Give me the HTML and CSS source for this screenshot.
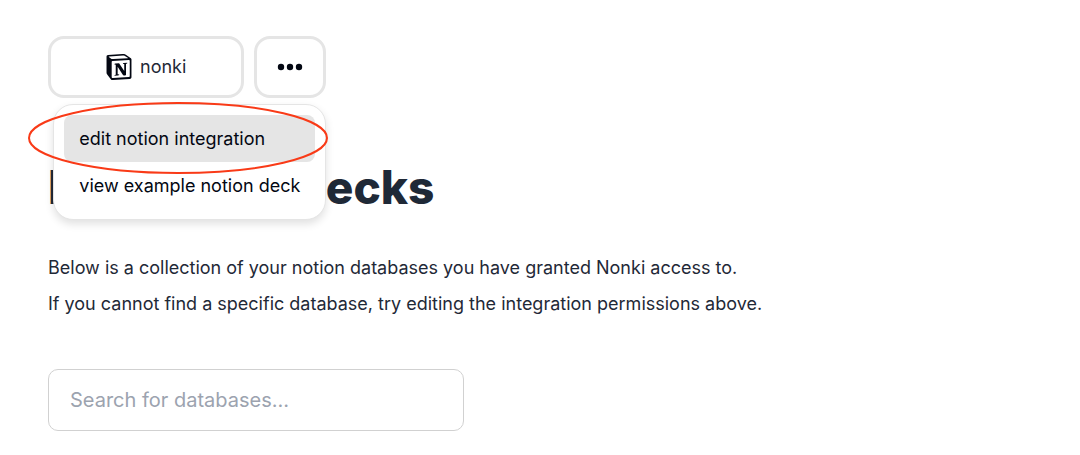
FILE: index.html
```html
<!DOCTYPE html>
<html lang="en">
<head>
    <meta charset="UTF-8">
    <meta name="viewport" content="width=device-width, initial-scale=1.0">
    <title>Nonki</title>
    <link rel="stylesheet" href="styles.css">
</head>
<body>

    <main class="page">
        <!-- Workspace buttons -->
        <div class="toolbar">
            <button type="button" class="btn workspace">
                <svg class="notion-logo" viewBox="0 0 24 24" aria-hidden="true">
                    <path d="M4.459 4.208c.746.606 1.026.56 2.428.466l13.215-.793c.28 0 .047-.28-.046-.326L17.86 1.968c-.42-.326-.981-.7-2.055-.607L3.01 2.295c-.466.046-.56.28-.374.466zm.793 3.08v13.904c0 .747.373 1.027 1.214.98l14.523-.84c.841-.046.935-.56.935-1.167V6.354c0-.606-.233-.933-.748-.887l-15.177.887c-.56.047-.747.327-.747.933zm14.337.745c.093.42 0 .84-.42.888l-.7.14v10.264c-.608.327-1.168.514-1.635.514-.748 0-.935-.234-1.495-.933l-4.577-7.186v6.952L12.21 19s0 .84-1.168.84l-3.222.186c-.093-.186 0-.653.327-.746l.84-.233V9.854L7.822 9.76c-.094-.42.14-1.026.793-1.073l3.456-.233 4.764 7.279v-6.44l-1.215-.139c-.093-.514.28-.887.747-.933zM1.936 1.035l13.31-.98c1.634-.14 2.055-.047 3.082.7l4.249 2.986c.7.513.934.653.934 1.213v16.378c0 1.026-.373 1.634-1.68 1.726l-15.458.934c-.98.047-1.448-.093-1.962-.747l-3.129-4.06c-.56-.747-.793-1.306-.793-1.96V2.667c0-.839.374-1.54 1.447-1.632z"/>
                </svg>
                nonki
            </button>
            <button type="button" class="btn more" aria-label="More options" aria-expanded="true">
                <svg class="dots" viewBox="0 0 26 8" aria-hidden="true">
                    <circle cx="4" cy="4" r="3.2"/>
                    <circle cx="13" cy="4" r="3.2"/>
                    <circle cx="22" cy="4" r="3.2"/>
                </svg>
            </button>

            <div class="menu">
                <button type="button" class="menu-item active">edit notion integration</button>
                <button type="button" class="menu-item">view example notion deck</button>
            </div>

            <svg class="highlight" viewBox="0 0 300 72" aria-hidden="true">
                <ellipse cx="150" cy="36" rx="149" ry="35"/>
            </svg>
        </div>

        <h1>My Notion Decks</h1>

        <div class="intro">
            <p>Below is a collection of your notion databases you have granted Nonki access to.</p>
            <p>If you cannot find a specific database, try editing the integration permissions above.</p>
        </div>

        <input type="search" class="search" placeholder="Search for databases…" aria-label="Search for databases">
    </main>

</body>
</html>
```
FILE: styles.css
```css
* {
    margin: 0;
    padding: 0;
    box-sizing: border-box;
}

body {
    font-family: 'Inter', 'Liberation Sans', sans-serif;
    font-size: 18px;
    color: #1f2937;
    background-color: #fff;
}

button, input {
    font: inherit;
}

.page {
    padding: 36px 48px 24px;
}

/* Workspace buttons */
.toolbar {
    display: flex;
    gap: 10px;
    width: fit-content;
    position: relative;
}

.btn {
    display: flex;
    align-items: center;
    justify-content: center;
    gap: 8px;
    padding: 15px 55px;
    line-height: 24px;
    color: #1f2937;
    background-color: #fff;
    border: 3px solid #e5e5e5;
    border-radius: 16px;
    cursor: pointer;
}

.more {
    padding: 15px 20px;
}

.notion-logo {
    width: 26px;
    height: 26px;
    fill: #030712;
}

.dots {
    width: 26px;
    height: 8px;
    fill: #030712;
}

/* Dropdown */
.menu {
    position: absolute;
    top: 100%;
    right: 0;
    z-index: 1;
    margin-top: 6px;
    padding: 10px;
    background-color: #fff;
    border: 1px solid #e5e5e5;
    border-radius: 20px;
    box-shadow: 0 4px 8px rgba(0, 0, 0, 0.12);
}

.menu-item {
    display: block;
    width: 100%;
    padding: 12px 15px;
    line-height: 23px;
    text-align: left;
    white-space: nowrap;
    color: #030712;
    background-color: transparent;
    border: none;
    border-radius: 8px;
    cursor: pointer;
}

.menu-item.active {
    background-color: #e5e5e5;
}

/* Red ring around the active item */
.highlight {
    position: absolute;
    top: 66px;
    left: -20px;
    z-index: 2;
    width: 300px;
    height: 72px;
    fill: none;
    stroke: #f93a17;
    stroke-width: 2;
    pointer-events: none;
}

h1 {
    margin-top: 65px;
    font-size: 46px;
    font-weight: 800;
    line-height: 48px;
}

.intro {
    margin-top: 39px;
    line-height: 36px;
}

.search {
    display: block;
    width: 100%;
    max-width: 416px;
    margin-top: 47px;
    padding: 16px 21px;
    font-size: 20px;
    line-height: 28px;
    color: #1f2937;
    background-color: #fff;
    border: 1px solid #d1d1d1;
    border-radius: 10px;
    outline: none;
}

.search::placeholder {
    color: #9ca3af;
}
```
